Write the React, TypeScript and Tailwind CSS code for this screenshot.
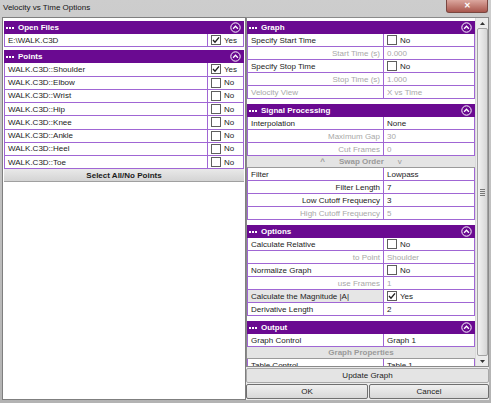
import React from "react";

type Row =
  | { kind: "row"; label: string; value: string; check?: boolean; on?: boolean; right?: boolean; dimL?: boolean; dimV?: boolean; hl?: boolean }
  | { kind: "btn"; label: string };

const SECTIONS: { title: string; rows: Row[] }[] = [
  {
    title: "Graph",
    rows: [
      { kind: "row", label: "Specify Start Time", value: "No", check: true },
      { kind: "row", label: "Start Time (s)", value: "0.000", right: true, dimL: true, dimV: true },
      { kind: "row", label: "Specify Stop Time", value: "No", check: true },
      { kind: "row", label: "Stop Time (s)", value: "1.000", right: true, dimL: true, dimV: true },
      { kind: "row", label: "Velocity View", value: "X vs Time", dimL: true, dimV: true },
    ],
  },
  {
    title: "Signal Processing",
    rows: [
      { kind: "row", label: "Interpolation", value: "None" },
      { kind: "row", label: "Maximum Gap", value: "30", right: true, dimL: true, dimV: true },
      { kind: "row", label: "Cut Frames", value: "0", right: true, dimL: true, dimV: true },
      { kind: "btn", label: "Swap Order" },
      { kind: "row", label: "Filter", value: "Lowpass" },
      { kind: "row", label: "Filter Length", value: "7", right: true },
      { kind: "row", label: "Low Cutoff Frequency", value: "3", right: true },
      { kind: "row", label: "High Cutoff Frequency", value: "5", right: true, dimL: true, dimV: true },
    ],
  },
  {
    title: "Options",
    rows: [
      { kind: "row", label: "Calculate Relative", value: "No", check: true },
      { kind: "row", label: "to Point", value: "Shoulder", right: true, dimL: true, dimV: true },
      { kind: "row", label: "Normalize Graph", value: "No", check: true },
      { kind: "row", label: "use Frames", value: "1", right: true, dimL: true, dimV: true },
      { kind: "row", label: "Calculate the Magnitude |A|", value: "Yes", check: true, on: true, hl: true },
      { kind: "row", label: "Derivative Length", value: "2" },
    ],
  },
  {
    title: "Output",
    rows: [
      { kind: "row", label: "Graph Control", value: "Graph 1" },
      { kind: "btn", label: "Graph Properties" },
      { kind: "row", label: "Table Control", value: "Table 1" },
    ],
  },
];

const POINTS = ["Shoulder", "Elbow", "Wrist", "Hip", "Knee", "Ankle", "Heel", "Toe"];

function Collapse() {
  return (
    <svg width="11" height="11" viewBox="0 0 11 11" className="shrink-0">
      <circle cx="5.5" cy="5.5" r="4.7" fill="none" stroke="white" strokeWidth="1" />
      <path d="M3.1 6.7 L5.5 4.2 L7.9 6.7" fill="none" stroke="white" strokeWidth="1.3" />
    </svg>
  );
}

function Header({ title }: { title: string }) {
  return (
    <div className="flex h-[13px] shrink-0 items-center justify-between bg-[#6a0a91] pl-[2px] pr-[3px] font-bold text-white">
      <span className="flex items-center gap-[4px] pt-px">
        <span className="flex gap-px">
          <span className="h-[2px] w-[2px] bg-white" />
          <span className="h-[2px] w-[2px] bg-white" />
          <span className="h-[2px] w-[2px] bg-white" />
        </span>
        {title}
      </span>
      <Collapse />
    </div>
  );
}

function Check({ on }: { on?: boolean }) {
  return (
    <span className="flex h-[10px] w-[10px] shrink-0 items-center justify-center border border-[#5e5e5e] bg-white">
      {on && (
        <svg width="8" height="8" viewBox="0 0 8 8">
          <path d="M1 4 L3 6.2 L7 1.4" fill="none" stroke="#222" strokeWidth="1.4" />
        </svg>
      )}
    </span>
  );
}

function PointRow({ name, value, on }: { name: string; value: string; on?: boolean }) {
  return (
    <div className="flex h-[13.25px] shrink-0 border-x border-b border-[#a066d4]">
      <div className="flex flex-1 items-center pl-[3px] pt-px">{name}</div>
      <div className="flex w-[36px] items-center gap-[3px] border-l border-[#a066d4] pl-[3px]">
        <Check on={on} />
        <span className="pt-px">{value}</span>
      </div>
    </div>
  );
}

function PropRow({ r }: { r: Row }) {
  if (r.kind === "btn") {
    return (
      <div className="flex h-[12px] shrink-0 items-center justify-center gap-[14px] border-b border-[#9a9a9a] bg-[#e4e4e4] pt-px font-bold text-[#9a9a9a]">
        {r.label === "Swap Order" && <span>^</span>}
        <span>{r.label}</span>
        {r.label === "Swap Order" && <span className="font-normal">v</span>}
      </div>
    );
  }
  return (
    <div className="flex h-[13px] shrink-0 border-x border-b border-[#a066d4]">
      <div
        className={`flex w-[135px] items-center px-[3px] pt-px ${r.right ? "justify-end" : ""} ${r.dimL ? "text-[#a8a8a8]" : ""} ${r.hl ? "bg-[#e6e6e6]" : ""}`}
      >
        {r.label}
      </div>
      <div className={`flex flex-1 items-center gap-[3px] border-l border-[#a066d4] pl-[3px] ${r.dimV ? "text-[#a8a8a8]" : ""}`}>
        {r.check && <Check on={r.on} />}
        <span className="pt-px">{r.value}</span>
      </div>
    </div>
  );
}

function ScrollBar() {
  return (
    <div className="flex w-[13px] shrink-0 flex-col items-center border-l border-[#dadada] bg-[#ececec]">
      <div className="flex h-[10px] items-center justify-center">
        <svg width="5" height="3" viewBox="0 0 5 3"><path d="M0 3 L2.5 0 L5 3Z" fill="#333" /></svg>
      </div>
      <div className="flex w-[11px] flex-1 items-center justify-center rounded-[2px] border border-[#a3a3a3] bg-gradient-to-r from-[#f2f2f2] to-[#d6d6d6]">
        <div className="flex flex-col gap-[1px]">
          <span className="h-px w-[5px] bg-[#777]" />
          <span className="h-px w-[5px] bg-[#777]" />
          <span className="h-px w-[5px] bg-[#777]" />
          <span className="h-px w-[5px] bg-[#777]" />
        </div>
      </div>
      <div className="flex h-[10px] items-center justify-center">
        <svg width="5" height="3" viewBox="0 0 5 3"><path d="M0 0 L2.5 3 L5 0Z" fill="#333" /></svg>
      </div>
    </div>
  );
}

export default function App() {
  return (
    <div className="flex h-[403px] w-[491px] flex-col overflow-hidden bg-gradient-to-b from-[#cdcdcd] to-[#b3b3b3] font-['Liberation_Sans',Arial,sans-serif] text-[8px] leading-none text-[#1b1b1b]">
      {/* Title bar */}
      <div className="flex h-[17px] shrink-0 items-start justify-between pl-[3px]">
        <span className="pt-[4px] text-[#151515]">Velocity vs Time Options</span>
        <div className="mr-[3px] flex h-[13px] w-[42px] items-center justify-center rounded-b-[3px] border border-t-0 border-[#7a4640] bg-gradient-to-b from-[#dba79f] to-[#a8564d] text-[8px] font-bold text-white">
          ✕
        </div>
      </div>

      <div className="flex flex-1 pb-[3px] pl-[2px] pr-[2px]">
        {/* Left panel */}
        <div className="flex w-[244px] shrink-0 flex-col border border-[#7f7f7f] bg-white px-[1px] pt-[3px]">
          <Header title="Open Files" />
          <PointRow name="E:\WALK.C3D" value="Yes" on />
          <div className="h-[3px] shrink-0" />
          <Header title="Points" />
          {POINTS.map((p, i) => (
            <PointRow key={p} name={`WALK.C3D::${p}`} value={i === 0 ? "Yes" : "No"} on={i === 0} />
          ))}
          <div className="flex h-[13px] shrink-0 items-center justify-center border-b border-[#a0a0a0] bg-gradient-to-b from-[#e9e9e9] to-[#d4d4d4] pt-px font-bold">
            Select All/No Points
          </div>
        </div>

        {/* Right side */}
        <div className="flex flex-1 flex-col bg-[#ececec]">
          <div className="flex h-[350px] shrink-0 border border-[#8a8a8a] bg-white">
            <div className="flex flex-1 flex-col overflow-hidden pt-[3px]">
              {SECTIONS.map((s, i) => (
                <div key={s.title} className={`flex flex-col ${i > 0 ? "mt-[5px]" : ""}`}>
                  <Header title={s.title} />
                  {s.rows.map((r, j) => (
                    <PropRow key={j} r={r} />
                  ))}
                </div>
              ))}
            </div>
            <ScrollBar />
          </div>
          <div className="mt-[1px] flex h-[15px] shrink-0 items-center justify-center rounded-[2px] border border-[#a8a8a8] bg-[#e4e4e4] pt-px">
            Update Graph
          </div>
          <div className="mt-[1px] flex h-[15px] shrink-0 gap-[1px]">
            <div className="flex w-[122px] items-center justify-center rounded-[2px] border border-[#6f6f6f] bg-gradient-to-b from-[#f0f0f0] to-[#d8d8d8] pt-px">
              OK
            </div>
            <div className="flex flex-1 items-center justify-center rounded-[2px] border border-[#6f6f6f] bg-gradient-to-b from-[#f0f0f0] to-[#d8d8d8] pt-px">
              Cancel
            </div>
          </div>
        </div>
      </div>
    </div>
  );
}
